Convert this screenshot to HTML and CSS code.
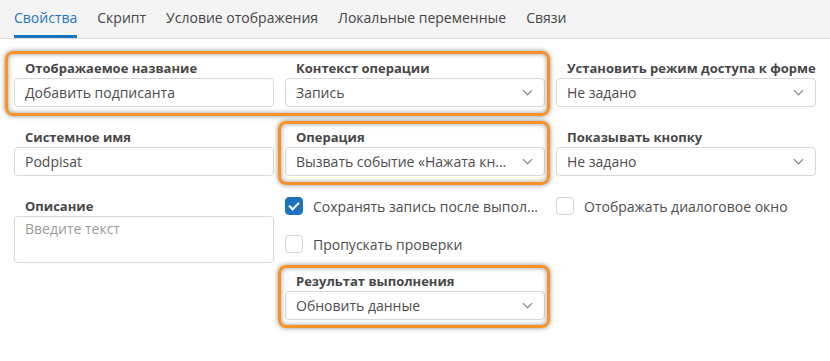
FILE: index.html
```html
<!DOCTYPE html>
<html lang="ru">
<head>
    <meta charset="UTF-8">
    <meta name="viewport" content="width=device-width, initial-scale=1.0">
    <title>Свойства кнопки</title>
    <link rel="stylesheet" href="styles.css">
</head>
<body>
    <div class="tabs">
        <div class="tab active">Свойства</div>
        <div class="tab">Скрипт</div>
        <div class="tab">Условие отображения</div>
        <div class="tab">Локальные переменные</div>
        <div class="tab">Связи</div>
    </div>
    <div class="form">
        <div class="field">
            <label>Отображаемое название</label>
            <div class="input">Добавить подписанта</div>
        </div>
        <div class="field">
            <label>Контекст операции</label>
            <div class="input select">Запись</div>
        </div>
        <div class="field">
            <label>Установить режим доступа к форме</label>
            <div class="input select">Не задано</div>
        </div>

        <div class="field">
            <label>Системное имя</label>
            <div class="input">Podpisat</div>
        </div>
        <div class="field">
            <label>Операция</label>
            <div class="input select">Вызвать событие «Нажата кн...</div>
        </div>
        <div class="field">
            <label>Показывать кнопку</label>
            <div class="input select">Не задано</div>
        </div>

        <div class="field">
            <label>Описание</label>
            <div class="textarea">Введите текст</div>
        </div>
        <div class="stack">
            <div class="check"><span class="box checked"></span>Сохранять запись после выпол...</div>
            <div class="check"><span class="box"></span>Пропускать проверки</div>
            <div class="field result">
                <label>Результат выполнения</label>
                <div class="input select">Обновить данные</div>
            </div>
        </div>
        <div class="check"><span class="box"></span>Отображать диалоговое окно</div>

        <div class="mark mark-1"></div>
        <div class="mark mark-2"></div>
        <div class="mark mark-3"></div>
    </div>
</body>
</html>
```

FILE: styles.css
```css
html, body{
    min-height: 100%;
}
body{
    margin: 0px;
    padding: 0px;
    background-color: #fff;
    font-family: "Open Sans", "Noto Sans", sans-serif;
    color: #4a4a4a;
}
.tabs{
    display: flex;
    gap: 20px;
    height: 38px;
    padding-left: 14px;
    background-color: #f4f4f4;
    border-bottom: 1px solid #dcdcdc;
}
.tab{
    font-size: 14px;
    line-height: 35px;
    border-bottom: 3px solid transparent;
    color: #444;
}
.tab.active{
    color: #1b76bf;
    border-bottom-color: #1a74bd;
}
.form{
    position: relative;
    display: grid;
    grid-template-columns: 260px 260px 260px;
    column-gap: 11px;
    row-gap: 21px;
    align-items: start;
    padding: 20px 0px 41px 14px;
}
.field label{
    display: block;
    font-size: 13px;
    font-weight: bold;
    line-height: 18px;
    padding-left: 11px;
    margin-bottom: 1px;
    color: #474747;
    white-space: nowrap;
}
.input{
    position: relative;
    height: 29px;
    box-sizing: border-box;
    border: 1px solid #d8d8d8;
    border-radius: 4px;
    padding: 0px 10px;
    font-size: 14px;
    line-height: 27px;
    color: #4d4d4d;
    white-space: nowrap;
}
.select::after{
    content: "";
    position: absolute;
    right: 13px;
    top: 8px;
    width: 6px;
    height: 6px;
    border-right: 1px solid #777;
    border-bottom: 1px solid #777;
    transform: rotate(45deg);
}
.textarea{
    height: 47px;
    box-sizing: border-box;
    border: 1px solid #d8d8d8;
    border-radius: 4px;
    padding: 2px 10px;
    font-size: 14px;
    line-height: 20px;
    color: #9a9a9a;
}
.stack{
    display: flex;
    flex-direction: column;
    gap: 20px;
}
.stack .result{
    margin-top: -1px;
}
.check{
    display: flex;
    align-items: center;
    gap: 10px;
    height: 18px;
    font-size: 14px;
    color: #4d4d4d;
    white-space: nowrap;
}
.box{
    width: 18px;
    height: 18px;
    box-sizing: border-box;
    border: 1px solid #d4d4d4;
    border-radius: 4px;
    flex-shrink: 0;
    position: relative;
}
.box.checked{
    background-color: #1b74bd;
    border-color: #1b74bd;
}
.box.checked::after{
    content: "";
    position: absolute;
    left: 5px;
    top: 2px;
    width: 4px;
    height: 8px;
    border-right: 2px solid #fff;
    border-bottom: 2px solid #fff;
    transform: rotate(45deg);
}
.mark{
    position: absolute;
    box-sizing: border-box;
    border: 3px solid #f7922b;
    border-radius: 8px;
    box-shadow: 0 0 5px rgba(0, 0, 0, 0.45),
                inset 0 0 5px rgba(0, 0, 0, 0.4);
}
.mark-1{
    left: 5px;
    top: 12px;
    width: 545px;
    height: 65px;
}
.mark-2{
    left: 278px;
    top: 82px;
    width: 272px;
    height: 64px;
}
.mark-3{
    left: 278px;
    top: 226px;
    width: 272px;
    height: 63px;
}
```
